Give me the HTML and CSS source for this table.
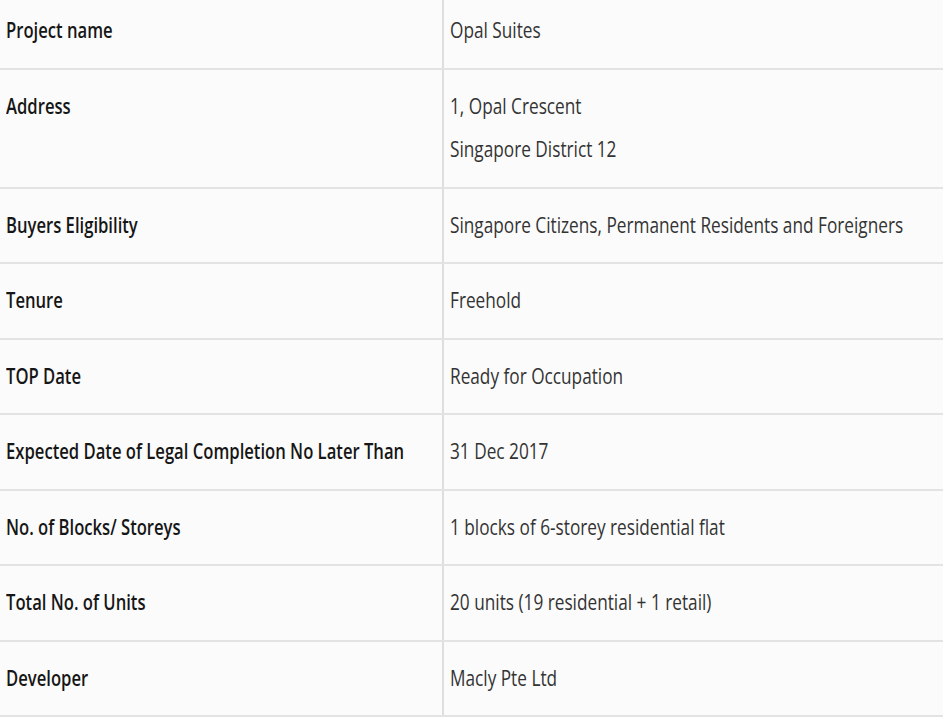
FILE: index.html
```html
<!DOCTYPE html>
<html lang="en">
<head>
    <meta charset="UTF-8">
    <meta name="viewport" content="width=device-width, initial-scale=1.0">
    <title>Opal Suites</title>
    <link rel="stylesheet" href="styles.css">
</head>
<body>
    <table class="details">
        <tr>
            <td class="label"><span class="txt">Project name</span></td>
            <td class="value"><span class="txt">Opal Suites</span></td>
        </tr>
        <tr>
            <td class="label"><span class="txt">Address</span></td>
            <td class="value"><span class="txt">1, Opal Crescent<br>Singapore District 12</span></td>
        </tr>
        <tr>
            <td class="label"><span class="txt">Buyers Eligibility</span></td>
            <td class="value"><span class="txt">Singapore Citizens, Permanent Residents and Foreigners</span></td>
        </tr>
        <tr>
            <td class="label"><span class="txt">Tenure</span></td>
            <td class="value"><span class="txt">Freehold</span></td>
        </tr>
        <tr>
            <td class="label"><span class="txt">TOP Date</span></td>
            <td class="value"><span class="txt">Ready for Occupation</span></td>
        </tr>
        <tr>
            <td class="label"><span class="txt">Expected Date of Legal Completion No Later Than</span></td>
            <td class="value"><span class="txt">31 Dec 2017</span></td>
        </tr>
        <tr>
            <td class="label"><span class="txt">No. of Blocks/ Storeys</span></td>
            <td class="value"><span class="txt">1 blocks of 6-storey residential flat</span></td>
        </tr>
        <tr>
            <td class="label"><span class="txt">Total No. of Units</span></td>
            <td class="value"><span class="txt">20 units (19 residential + 1 retail)</span></td>
        </tr>
        <tr>
            <td class="label"><span class="txt">Developer</span></td>
            <td class="value"><span class="txt">Macly Pte Ltd</span></td>
        </tr>
    </table>
</body>
</html>
```

FILE: styles.css
```css
body {
    margin: 0;
    background-color: #fbfbfb;
    font-family: "Open Sans", "Liberation Sans", sans-serif;
    overflow: hidden;
}
.details {
    width: 943px;
    margin-top: -8px;
    border-collapse: collapse;
    table-layout: fixed;
}
.details td {
    padding: 15px 6px;
    font-size: 21px;
    line-height: 43.5px;
    vertical-align: top;
    white-space: nowrap;
    overflow: hidden;
    border-top: 2px solid #e3e3e3;
    border-bottom: 2px solid #e3e3e3;
}
/* text in the shot is squeezed sideways */
.txt {
    display: inline-block;
    transform: scaleX(0.82);
    transform-origin: left center;
}
.label {
    width: 430px;
    font-weight: 600;
    color: #161616;
    border-right: 2px solid #dedede;
}
.label .txt {
    transform: scaleX(0.792);
}
.value {
    color: #333;
}
```
